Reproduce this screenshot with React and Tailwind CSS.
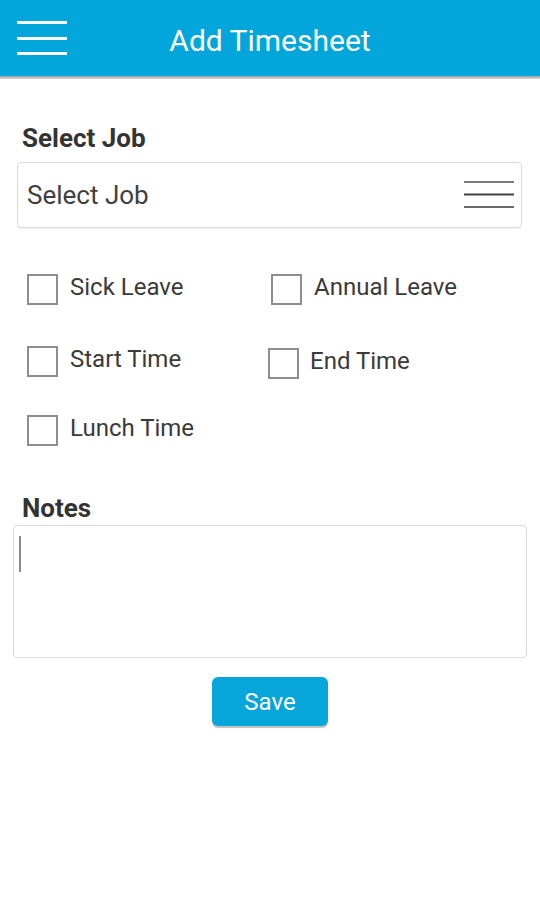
import React from 'react';

const checkRows = [
  {
    mt: 'mt-[46px]',
    left: { label: 'Sick Leave', box: '', gap: 'ml-[12px]' },
    right: { label: 'Annual Leave', box: 'ml-[3px]', gap: 'ml-[12px]' },
  },
  {
    mt: 'mt-[41px]',
    left: { label: 'Start Time', box: '', gap: 'ml-[12px]' },
    right: { label: 'End Time', box: 'mt-[2px]', gap: 'ml-[11px] mt-[2px]' },
  },
  {
    mt: 'mt-[36px]',
    left: { label: 'Lunch Time', box: '', gap: 'ml-[12px]' },
    right: null,
  },
];

const CheckItem = ({ item }) => (
  <label className="flex items-start">
    <span className={`block w-[31px] h-[31px] border-[2.5px] border-[#8e8e8e] bg-white ${item.box}`} />
    <span className={`text-[24px] leading-[26px] text-[#3a3a3a] ${item.gap}`}>{item.label}</span>
  </label>
);

const AddTimesheet = () => {
  return (
    <div className="w-[540px] h-[900px] bg-white font-['Roboto','Liberation_Sans',sans-serif]">
      {/* top bar */}
      <div className="h-[76px] bg-[#03a6da] grid grid-cols-[1fr_auto_1fr] items-center">
        <div className="pl-[17px]">
          <svg width="50" height="36" viewBox="0 0 50 36" className="block">
            <line x1="0" y1="2.5" x2="50" y2="2.5" stroke="white" strokeWidth="3" />
            <line x1="0" y1="18.5" x2="50" y2="18.5" stroke="white" strokeWidth="3" />
            <line x1="0" y1="33.5" x2="50" y2="33.5" stroke="white" strokeWidth="3" />
          </svg>
        </div>
        <h1 className="text-[30px] leading-[34px] text-white pt-[6px]">Add Timesheet</h1>
        <div />
      </div>
      <div className="h-[3px] bg-gradient-to-b from-[#9c9c9c] to-[#dcdcdc]" />

      {/* job */}
      <div className="mt-[44px] pl-[22px] text-[26px] leading-[30px] font-bold text-[#333]">Select Job</div>
      <div className="mt-[9px] ml-[17px] w-[505px] h-[66px] border border-[#dadada] rounded-[4px] shadow-[0_1px_1px_rgba(0,0,0,0.06)] flex items-center justify-between pl-[9px] pr-[7px]">
        <span className="text-[26px] leading-[30px] text-[#404040]">Select Job</span>
        <svg width="50" height="28" viewBox="0 0 50 28" className="block">
          <line x1="0" y1="1" x2="50" y2="1" stroke="#7a7a7a" strokeWidth="2" />
          <line x1="0" y1="13.5" x2="50" y2="13.5" stroke="#444" strokeWidth="2" />
          <line x1="0" y1="26" x2="50" y2="26" stroke="#6a6a6a" strokeWidth="2" />
        </svg>
      </div>

      {/* options */}
      <div className="pl-[27px]">
        {checkRows.map((row) => (
          <div key={row.left.label} className={`grid grid-cols-[241px_1fr] ${row.mt}`}>
            <CheckItem item={row.left} />
            {row.right ? <CheckItem item={row.right} /> : <div />}
          </div>
        ))}
      </div>

      {/* notes */}
      <div className="mt-[47px] pl-[22px] text-[26px] leading-[30px] font-bold text-[#333]">Notes</div>
      <div className="mt-[2px] ml-[13px] w-[514px] h-[133px] border border-[#dadada] rounded-[4px] pt-[10px] pl-[5px]">
        <span className="block w-[2px] h-[36px] bg-[#8a8a8a]" />
      </div>

      <div className="mt-[19px] flex justify-center">
        <button className="w-[116px] h-[49px] rounded-[6px] bg-[#06a5da] text-white text-[24px] leading-[28px] shadow-[0_2px_1px_rgba(0,0,0,0.25)]">
          Save
        </button>
      </div>
    </div>
  );
};

export default AddTimesheet;
